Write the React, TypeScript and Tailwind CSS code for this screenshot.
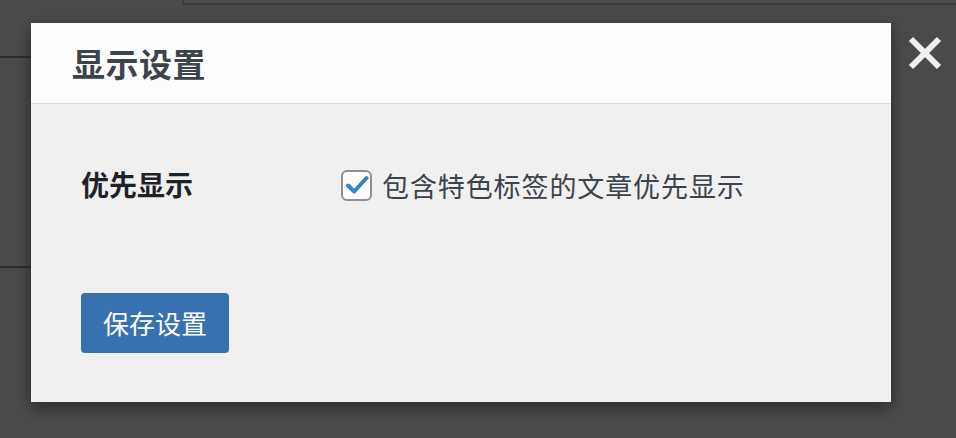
import React from "react";

const font = { fontFamily: '"Noto Sans CJK SC", "Noto Sans", sans-serif' };

export default function App() {
  return (
    <div className="relative w-[956px] h-[438px] overflow-hidden bg-[#4a4a4a]" style={font}>
      {/* background page remnants */}
      <div className="absolute left-[182px] top-[-20px] right-[-10px] h-[25px] border-l-2 border-b-2 border-[#3a3a3a] bg-[#4c4c4c]" />
      <div className="absolute left-0 top-[56px] w-[40px] h-[2px] bg-[#2e2e2e]" />
      <div className="absolute left-0 top-[266px] w-[40px] h-[2px] bg-[#2e2e2e]" />

      {/* modal */}
      <div className="absolute left-[31px] top-[23px] w-[860px] h-[379px] flex flex-col bg-[#f0f0f1] shadow-[0_5px_15px_rgba(0,0,0,0.45)]">
        <div className="h-[81px] shrink-0 bg-[#fdfdfd] border-b border-[#dcdcde] flex items-center pl-[41px]">
          <h1 className="text-[33px] font-bold text-[#3c434a] leading-none tracking-[0.5px]">显示设置</h1>
        </div>
        <div className="flex flex-col pl-[50px] pt-[60px]">
          <div className="flex items-center h-[40px]">
            <div className="w-[260px] text-[28px] font-bold text-[#1d2327] leading-none">优先显示</div>
            <label className="flex items-center gap-[10px] mt-[2px]">
              <span className="w-[31px] h-[31px] rounded-[6px] border-2 border-[#8c8f94] bg-white flex items-center justify-center">
                <svg width="24" height="24" viewBox="0 0 24 24">
                  <path d="M3 12.5 L9.2 18.5 L21.5 5" fill="none" stroke="#3582c4" strokeWidth="4" strokeLinecap="round" strokeLinejoin="round" />
                </svg>
              </span>
              <span className="text-[27px] text-[#3c434a] leading-none tracking-[0.9px]">包含特色标签的文章优先显示</span>
            </label>
          </div>
          <div className="mt-[89px]">
            <button className="w-[148px] h-[60px] rounded-[4px] bg-[#3871b0] text-white text-[26px] leading-none flex items-center justify-center">
              保存设置
            </button>
          </div>
        </div>
      </div>

      {/* close */}
      <div className="absolute left-[906px] top-[34px] w-[38px] h-[38px] flex items-center justify-center">
        <svg width="36" height="36" viewBox="0 0 36 36">
          <path d="M4 4 L32 32 M32 4 L4 32" stroke="#f0f0f0" strokeWidth="6" />
        </svg>
      </div>
    </div>
  );
}
